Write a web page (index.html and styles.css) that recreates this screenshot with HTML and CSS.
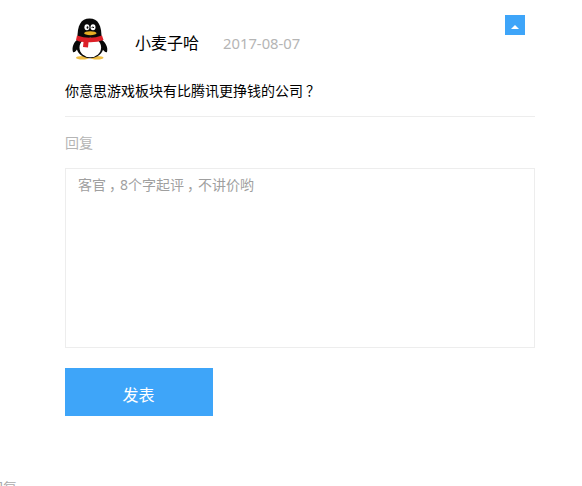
FILE: index.html
```html
<!DOCTYPE html>
<html lang="zh-CN">
<head>
<meta charset="utf-8">
<title>回复</title>
<link rel="stylesheet" href="styles.css">
</head>
<body>
<main class="comment">
  <header class="head">
    <svg class="avatar" viewBox="0 0 50 50" aria-hidden="true">
      <ellipse cx="17.500" cy="42.800" rx="6.500" ry="1.800" fill="#eebd43"/>
      <ellipse cx="32" cy="42.800" rx="6.500" ry="1.800" fill="#eebd43"/>
      <path d="M13 24C9 27 6.500 32 8 37C10 38 12 35 13 32ZM36 24C40 27 43.500 32 42 37C40 38 38 35 36 32Z" fill="#090909"/>
      <ellipse cx="25" cy="31.500" rx="13.500" ry="11.700" fill="#090909"/>
      <path d="M12.500 25C12 10 16 3.500 24.500 3.500S37 10 36.500 25Z" fill="#090909"/>
      <ellipse cx="25.300" cy="32.500" rx="10.800" ry="9.800" fill="#fff"/>
      <path d="M12 20.500Q25 25 37 20.500L38.500 25Q32 27.500 23.500 27.200L23 32.500L18 32L18.500 27Q14 27 11 25Z" fill="#dc2028"/>
      <ellipse cx="21.900" cy="12.300" rx="2.500" ry="3" fill="#fff"/>
      <ellipse cx="28" cy="12.300" rx="2.500" ry="3" fill="#fff"/>
      <ellipse cx="22.500" cy="12.500" rx=".9" ry="1.300" fill="#090909"/>
      <path d="M26.700 13Q27.700 10.500 29 13" fill="none" stroke="#090909"/>
      <ellipse cx="25.300" cy="18.200" rx="6.200" ry="2" fill="#e6ad24"/>
    </svg>
    <span class="name">小麦子哈</span>
    <time class="date">2017-08-07</time>
    <button class="toggle" aria-label="收起"><svg viewBox="0 0 20 20"><path d="M6 14L10 10L14 14Z" fill="#fff"/></svg></button>
  </header>
  <p class="text">你意思游戏板块有比腾讯更挣钱的公司<span class="question">？</span></p>
  <div class="label">回复</div>
  <div class="editor">客官<span class="comma">，</span>8个字起评<span class="comma">，</span>不讲价哟</div>
  <button class="submit">发表</button>
</main>
<footer class="next">回复</footer>
</body>
</html>
```
FILE: styles.css
```css
* { box-sizing: border-box; }
body {
  margin: 0;
  height: 486px;
  overflow: hidden;
  background: #fff;
  color: #000;
  font: 14px/20px "Noto Sans", "Noto Sans CJK SC", sans-serif;
}
.comment { width: 470px; margin-left: 65px; padding-top: 15px; }
.head { display: flex; height: 50px; }
.avatar { width: 50px; height: 50px; }
.name { margin: 18px 0 0 20px; font-size: 16px; }
.date { margin: 18px 0 0 24px; font-size: 14.8px; color: #b5b5b5; }
button { border: 0; padding: 0; font-family: inherit; }
.toggle { width: 20px; height: 20px; margin: 0 10px 0 auto; background: #3ea5f9; }
.toggle svg { display: block; }
.text { margin: 0; height: 52px; padding-top: 16px; border-bottom: 1px solid #ededed; }
.question { padding-left: 3px; }
.label { height: 51px; padding-top: 16px; color: #b5b5b5; }
.editor {
  height: 180px;
  padding: 6px 12px;
  border: 1px solid #ededed;
  color: #9f9f9f;
}
.comma { display: inline-block; width: 14px; text-indent: 3px; white-space: nowrap; }
.submit {
  display: block;
  width: 148px;
  height: 48px;
  margin-top: 20px;
  padding: 3px 1px 0 0;
  background: #3ea5f9;
  color: #fff;
  font-size: 16px;
}
.next { margin: 62px 0 0 -11px; color: #aaa; }
```
